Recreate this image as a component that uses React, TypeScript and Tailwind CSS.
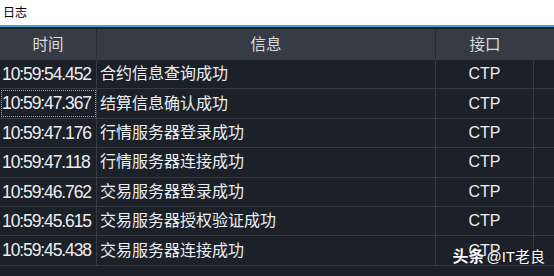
// 日志面板：标题栏 + 深色日志表格
const rows = [
  { time: "10:59:54.452", msg: "合约信息查询成功" },
  { time: "10:59:47.367", msg: "结算信息确认成功", focus: true },
  { time: "10:59:47.176", msg: "行情服务器登录成功" },
  { time: "10:59:47.118", msg: "行情服务器连接成功" },
  { time: "10:59:46.762", msg: "交易服务器登录成功" },
  { time: "10:59:45.615", msg: "交易服务器授权验证成功" },
  { time: "10:59:45.438", msg: "交易服务器连接成功" },
];

const font = { fontFamily: '"Liberation Sans", "Noto Sans CJK SC", sans-serif' };

export default function App() {
  return (
    <div className="relative flex h-[276px] w-[554px] flex-col overflow-hidden bg-[#1c2129]" style={font}>
      <div className="flex h-[25px] shrink-0 items-center bg-white pl-[3px] text-[12px] text-black">日志</div>
      <div className="h-[2px] shrink-0 bg-[#3ea6d6]" />
      <div className="h-[2px] shrink-0 bg-[#1a1f27]" />
      <div className="flex h-[31px] shrink-0 bg-[#353c46] text-[15.5px] text-[#d8dade]">
        <div className="flex w-[97px] items-center justify-center border-r border-[#262c35]">时间</div>
        <div className="flex w-[339px] items-center justify-center border-r border-[#262c35]">信息</div>
        <div className="flex w-[98px] items-center justify-center">接口</div>
        <div className="flex-1" />
      </div>
      <div className="flex flex-col">
        {rows.map((r) => (
          <div key={r.time} className="flex h-[29.4px] border-b border-[#353b45] text-[#eceef0]">
            <div
              className={
                "flex w-[97px] items-center border-r border-[#353b45] pl-[2px] text-[17.5px] tracking-[-1.1px] " +
                (r.focus ? "outline outline-1 outline-dotted outline-offset-[-2px] outline-[#9aa0a8]" : "")
              }
            >
              {r.time}
            </div>
            <div className="flex w-[339px] items-center border-r border-[#353b45] pl-[3px] text-[16px]">{r.msg}</div>
            <div className="flex w-[98px] items-center justify-center border-r border-[#353b45] text-[16px]">CTP</div>
          </div>
        ))}
      </div>
      <div
        className="absolute right-[9px] bottom-[7px] flex items-baseline text-white"
        style={{ textShadow: "0 0 2px rgba(0,0,0,0.8)" }}
      >
        <span className="text-[16px] font-bold">头条</span>
        <span className="ml-[2px] text-[15px]">@IT老良</span>
      </div>
    </div>
  );
}
